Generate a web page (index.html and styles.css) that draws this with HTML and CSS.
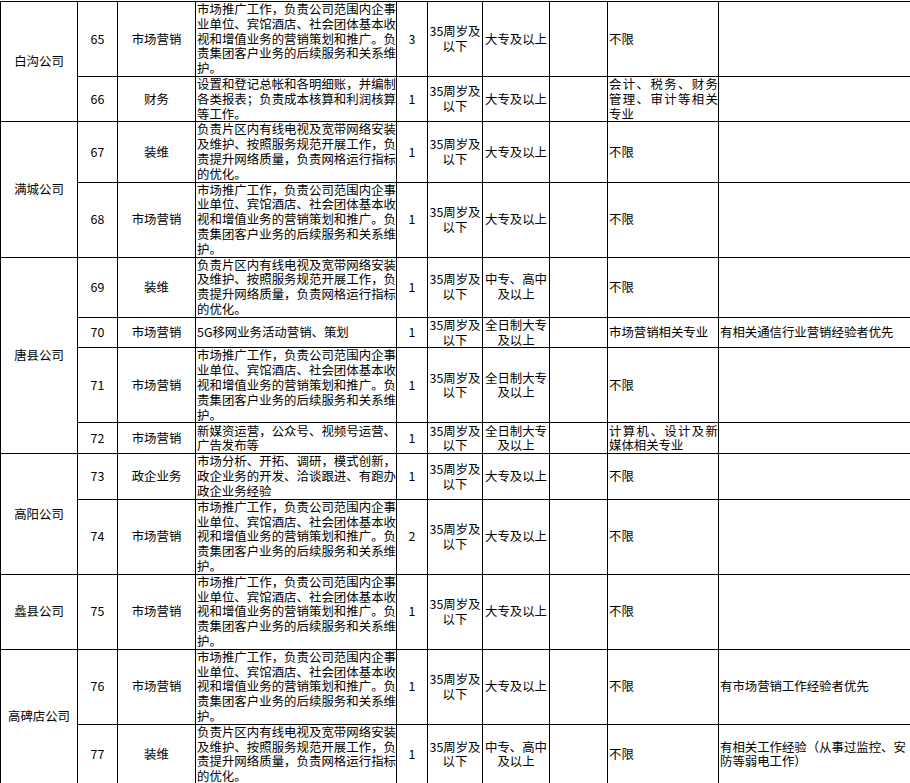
FILE: index.html
```html
<!DOCTYPE html>
<html lang="zh-CN">
<head>
<meta charset="utf-8">
<title>招聘岗位表</title>
<link rel="stylesheet" href="styles.css">
</head>
<body>
<table class="jobs">
  <colgroup>
    <col class="c-co"><col class="c-no"><col class="c-pos"><col class="c-desc"><col class="c-num"><col class="c-age"><col class="c-edu"><col class="c-blank"><col class="c-major"><col class="c-note">
  </colgroup>
  <tbody>
    <tr class="r5">
      <td class="ctr" rowspan="2">白沟公司</td>
      <td class="ctr">65</td>
      <td class="ctr">市场营销</td>
      <td class="desc">市场推广工作，负责公司范围内企事业单位、宾馆酒店、社会团体基本收视和增值业务的营销策划和推广。负责集团客户业务的后续服务和关系维护。</td>
      <td class="ctr">3</td>
      <td class="ctr">35周岁及以下</td>
      <td class="ctr">大专及以上</td>
      <td></td>
      <td class="major">不限</td>
      <td class="note"></td>
    </tr>
    <tr class="r3">
      <td class="ctr">66</td>
      <td class="ctr">财务</td>
      <td class="desc">设置和登记总帐和各明细账，并编制各类报表；负责成本核算和利润核算等工作。</td>
      <td class="ctr">1</td>
      <td class="ctr">35周岁及以下</td>
      <td class="ctr">大专及以上</td>
      <td></td>
      <td class="major">会计、税务、财务管理、审计等相关专业</td>
      <td class="note"></td>
    </tr>
    <tr class="r4">
      <td class="ctr" rowspan="2">满城公司</td>
      <td class="ctr">67</td>
      <td class="ctr">装维</td>
      <td class="desc">负责片区内有线电视及宽带网络安装及维护、按照服务规范开展工作，负责提升网络质量，负责网格运行指标的优化。</td>
      <td class="ctr">1</td>
      <td class="ctr">35周岁及以下</td>
      <td class="ctr">大专及以上</td>
      <td></td>
      <td class="major">不限</td>
      <td class="note"></td>
    </tr>
    <tr class="r5">
      <td class="ctr">68</td>
      <td class="ctr">市场营销</td>
      <td class="desc">市场推广工作，负责公司范围内企事业单位、宾馆酒店、社会团体基本收视和增值业务的营销策划和推广。负责集团客户业务的后续服务和关系维护。</td>
      <td class="ctr">1</td>
      <td class="ctr">35周岁及以下</td>
      <td class="ctr">大专及以上</td>
      <td></td>
      <td class="major">不限</td>
      <td class="note"></td>
    </tr>
    <tr class="r4">
      <td class="ctr" rowspan="4">唐县公司</td>
      <td class="ctr">69</td>
      <td class="ctr">装维</td>
      <td class="desc">负责片区内有线电视及宽带网络安装及维护、按照服务规范开展工作，负责提升网络质量，负责网格运行指标的优化。</td>
      <td class="ctr">1</td>
      <td class="ctr">35周岁及以下</td>
      <td class="ctr">中专、高中及以上</td>
      <td></td>
      <td class="major">不限</td>
      <td class="note"></td>
    </tr>
    <tr class="r2">
      <td class="ctr">70</td>
      <td class="ctr">市场营销</td>
      <td class="desc">5G移网业务活动营销、策划</td>
      <td class="ctr">1</td>
      <td class="ctr">35周岁及以下</td>
      <td class="ctr">全日制大专及以上</td>
      <td></td>
      <td class="major">市场营销相关专业</td>
      <td class="note">有相关通信行业营销经验者优先</td>
    </tr>
    <tr class="r5">
      <td class="ctr">71</td>
      <td class="ctr">市场营销</td>
      <td class="desc">市场推广工作，负责公司范围内企事业单位、宾馆酒店、社会团体基本收视和增值业务的营销策划和推广。负责集团客户业务的后续服务和关系维护。</td>
      <td class="ctr">1</td>
      <td class="ctr">35周岁及以下</td>
      <td class="ctr">全日制大专及以上</td>
      <td></td>
      <td class="major">不限</td>
      <td class="note"></td>
    </tr>
    <tr class="r2b">
      <td class="ctr">72</td>
      <td class="ctr">市场营销</td>
      <td class="desc">新媒资运营，公众号、视频号运营、广告发布等</td>
      <td class="ctr">1</td>
      <td class="ctr">35周岁及以下</td>
      <td class="ctr">全日制大专及以上</td>
      <td></td>
      <td class="major">计算机、设计及新媒体相关专业</td>
      <td class="note"></td>
    </tr>
    <tr class="r3b">
      <td class="ctr" rowspan="2">高阳公司</td>
      <td class="ctr">73</td>
      <td class="ctr">政企业务</td>
      <td class="desc">市场分析、开拓、调研，模式创新，政企业务的开发、洽谈跟进、有跑办政企业务经验</td>
      <td class="ctr">1</td>
      <td class="ctr">35周岁及以下</td>
      <td class="ctr">大专及以上</td>
      <td></td>
      <td class="major">不限</td>
      <td class="note"></td>
    </tr>
    <tr class="r5">
      <td class="ctr">74</td>
      <td class="ctr">市场营销</td>
      <td class="desc">市场推广工作，负责公司范围内企事业单位、宾馆酒店、社会团体基本收视和增值业务的营销策划和推广。负责集团客户业务的后续服务和关系维护。</td>
      <td class="ctr">2</td>
      <td class="ctr">35周岁及以下</td>
      <td class="ctr">大专及以上</td>
      <td></td>
      <td class="major">不限</td>
      <td class="note"></td>
    </tr>
    <tr class="r5">
      <td class="ctr">蠡县公司</td>
      <td class="ctr">75</td>
      <td class="ctr">市场营销</td>
      <td class="desc">市场推广工作，负责公司范围内企事业单位、宾馆酒店、社会团体基本收视和增值业务的营销策划和推广。负责集团客户业务的后续服务和关系维护。</td>
      <td class="ctr">1</td>
      <td class="ctr">35周岁及以下</td>
      <td class="ctr">大专及以上</td>
      <td></td>
      <td class="major">不限</td>
      <td class="note"></td>
    </tr>
    <tr class="r5">
      <td class="ctr" rowspan="2">高碑店公司</td>
      <td class="ctr">76</td>
      <td class="ctr">市场营销</td>
      <td class="desc">市场推广工作，负责公司范围内企事业单位、宾馆酒店、社会团体基本收视和增值业务的营销策划和推广。负责集团客户业务的后续服务和关系维护。</td>
      <td class="ctr">1</td>
      <td class="ctr">35周岁及以下</td>
      <td class="ctr">大专及以上</td>
      <td></td>
      <td class="major">不限</td>
      <td class="note">有市场营销工作经验者优先</td>
    </tr>
    <tr class="r4">
      <td class="ctr">77</td>
      <td class="ctr">装维</td>
      <td class="desc">负责片区内有线电视及宽带网络安装及维护、按照服务规范开展工作，负责提升网络质量，负责网格运行指标的优化。</td>
      <td class="ctr">1</td>
      <td class="ctr">35周岁及以下</td>
      <td class="ctr">中专、高中及以上</td>
      <td></td>
      <td class="major">不限</td>
      <td class="note">有相关工作经验（从事过监控、安防等弱电工作）</td>
    </tr>
  </tbody>
</table>
</body>
</html>
```
FILE: styles.css
```css
html, body {
  margin: 0;
  padding: 0;
  background: #fff;
  overflow: hidden;
}

body {
  padding-top: 1px;
}

.jobs {
  table-layout: fixed;
  border-collapse: collapse;
  width: 913px;
  font-family: "Noto Sans CJK SC", "Noto Sans", sans-serif;
  font-size: 12.4px;
  line-height: 14.8px;
  color: #000;
}

.c-co { width: 77px; }
.c-no { width: 40px; }
.c-pos { width: 78px; }
.c-desc { width: 201px; }
.c-num { width: 31px; }
.c-age { width: 55px; }
.c-edu { width: 67px; }
.c-blank { width: 58px; }
.c-major { width: 111px; }
.c-note { width: 195px; }

.jobs td {
  border: 1px solid #000;
  padding: 0 0 0 1px;
  vertical-align: middle;
  overflow: hidden;
  word-break: normal;
}

.jobs td.ctr {
  text-align: center;
  padding: 0;
}

.jobs td.desc,
.jobs td.major {
  text-align: justify;
}

.jobs td.note {
  text-align: left;
}

.r5 { height: 75px; }
.r4 { height: 60px; }
.r3 { height: 45px; }
.r3b { height: 44px; }
.r2 { height: 30px; }
.r2b { height: 31px; }
```
